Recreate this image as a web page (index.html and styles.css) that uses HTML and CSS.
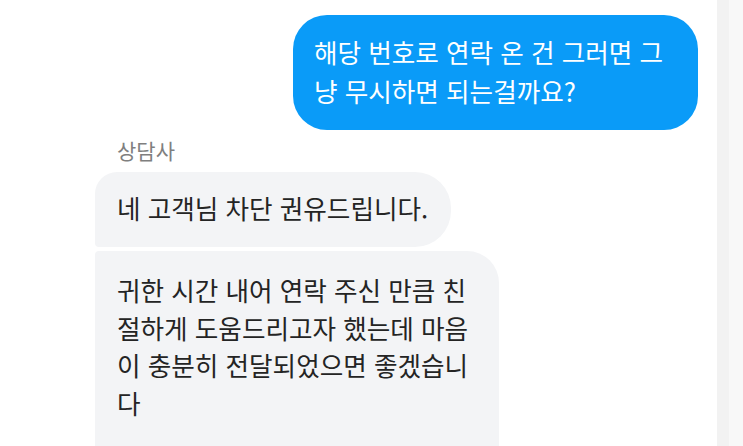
FILE: index.html
```html
<!DOCTYPE html>
<html lang="ko">
<head>
<meta charset="utf-8">
<title>상담</title>
<link rel="stylesheet" href="styles.css">
</head>
<body class="page">
  <main class="chat">
    <div class="bubble bubble-out">해당 번호로 연락 온 건 그러면 그<br>냥 무시하면 되는걸까요?</div>
    <div class="sender">상담사</div>
    <div class="bubble bubble-in bubble-first">네 고객님 차단 권유드립니다.</div>
    <div class="bubble bubble-in bubble-next">귀한 시간 내어 연락 주신 만큼 친<br>절하게 도움드리고자 했는데 마음<br>이 충분히 전달되었으면 좋겠습니<br>다</div>
  </main>
  <aside class="rail">
    <div class="rail-dark"></div>
    <div class="rail-light"></div>
  </aside>
</body>
</html>
```

FILE: styles.css
```css
html, body {
  margin: 0;
  padding: 0;
}

.page {
  width: 743px;
  height: 446px;
  overflow: hidden;
  display: flex;
  background: #ffffff;
  font-family: "Noto Sans CJK KR", "Noto Sans", sans-serif;
}

.chat {
  flex: 1;
  display: flex;
  flex-direction: column;
  padding: 15px 19px 0 95px;
  min-width: 0;
}

.bubble {
  box-sizing: border-box;
  font-size: 25.6px;
  line-height: 39px;
  white-space: nowrap;
}

.bubble-out {
  align-self: flex-end;
  width: 405px;
  padding: 17px 20px 20px 21px;
  border-radius: 34px;
  background: #0a9bf8;
  color: #ffffff;
}

.sender {
  margin-top: 8px;
  padding-left: 22px;
  font-size: 21px;
  line-height: 24px;
  color: #7f7f7f;
}

.bubble-in {
  background: #f3f4f6;
  color: #242424;
  align-self: flex-start;
}

.bubble-first {
  margin-top: 10px;
  padding: 16px 23px 20px 22px;
  border-radius: 22px 36px 36px 4px;
}

.bubble-next {
  flex: 1;
  margin-top: 4px;
  width: 404px;
  padding: 20px 22px 0 22px;
  line-height: 37.7px;
  border-radius: 4px 32px 0 0;
}

.rail {
  width: 26px;
  display: flex;
}

.rail-dark {
  width: 12px;
  background: #f2f2f2;
}

.rail-light {
  flex: 1;
  background: #f8f8f8;
}
```
